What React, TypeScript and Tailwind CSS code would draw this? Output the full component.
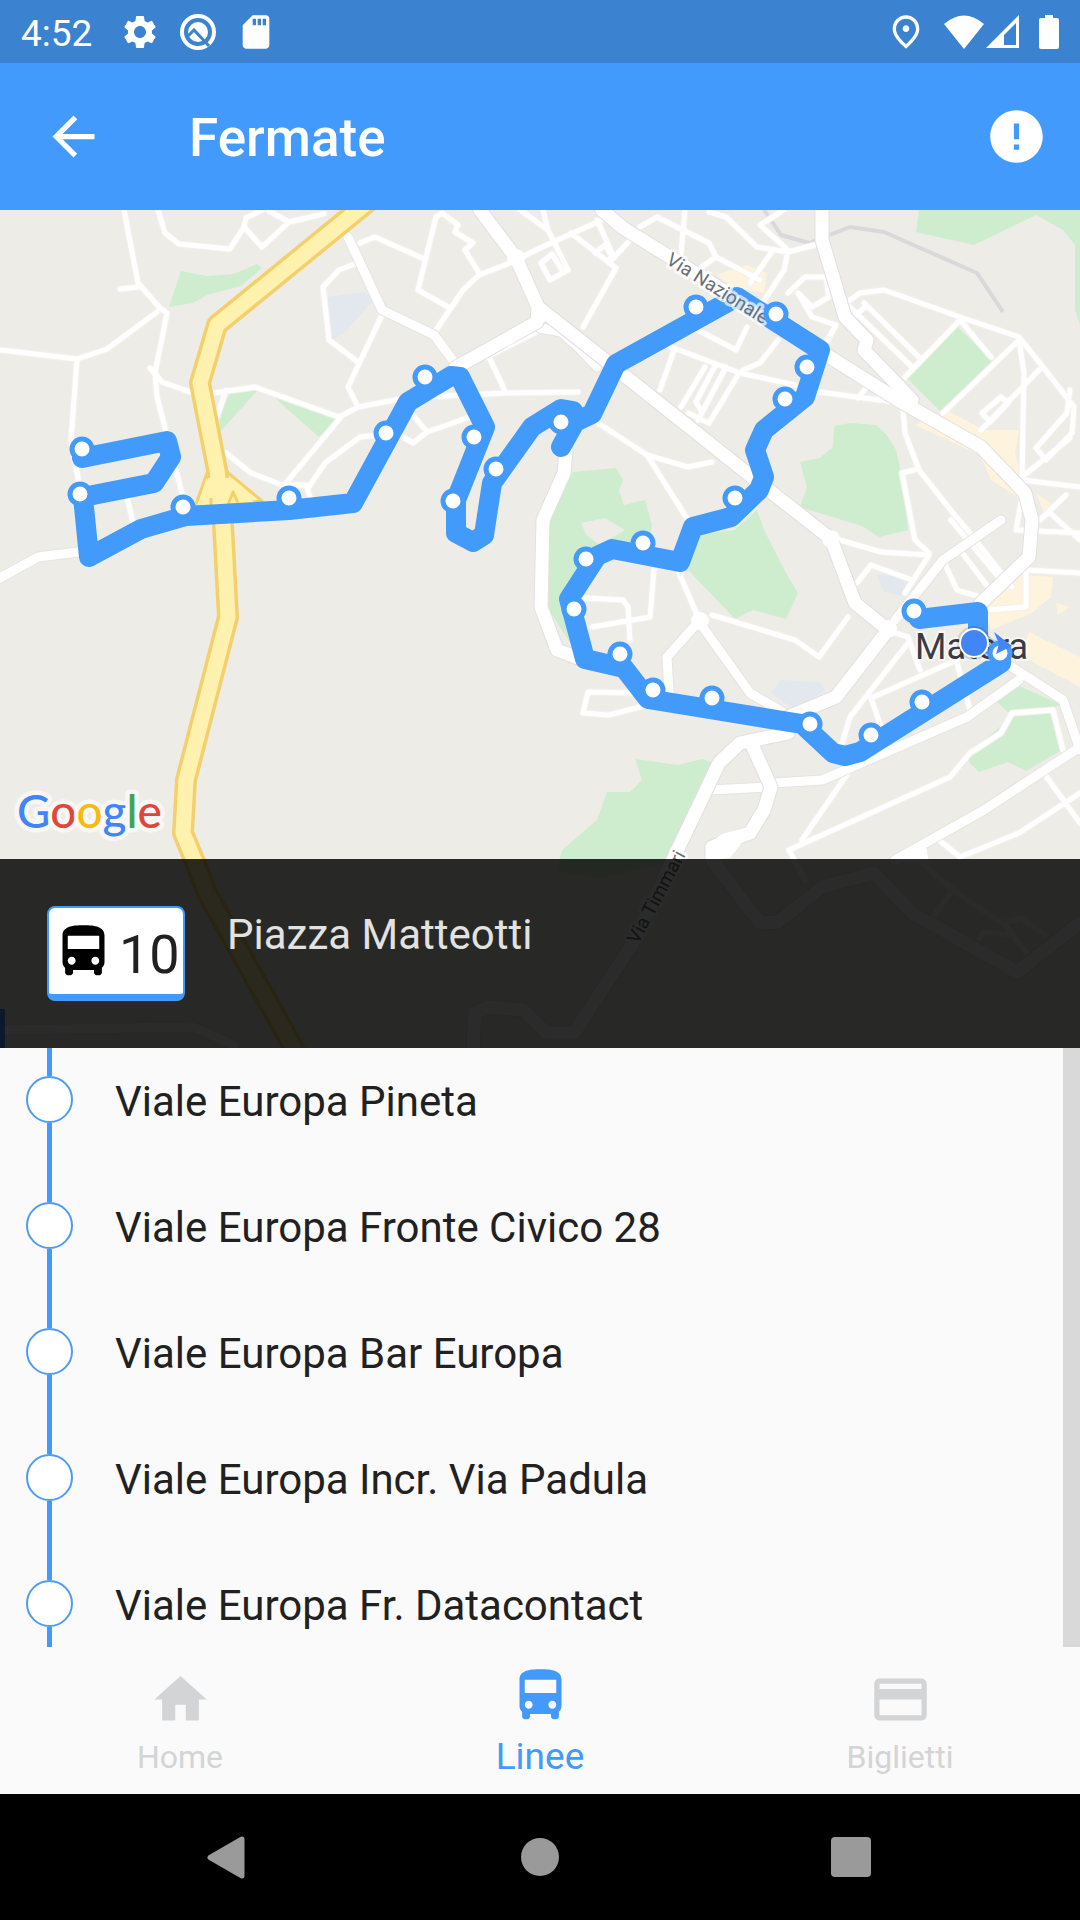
import {
    MdArrowBack,
    MdCreditCard,
    MdDirectionsBus,
    MdError,
    MdHome,
    MdOutlinePlace,
    MdSdCard,
    MdSettings,
} from "react-icons/md";

const stops = [
    "Viale Europa Pineta",
    "Viale Europa Fronte Civico 28",
    "Viale Europa Bar Europa",
    "Viale Europa Incr. Via Padula",
    "Viale Europa Fr. Datacontact",
];

const route =
    "M82 458 L167 441 L171 457 L154 483 L83 497 L89 557 L141 529 L186 516 L289 510 L353 503 L408 402 L451 376 L460 377 L485 427 L456 500 L456 533 L473 542 L484 535 L492 483 L532 427 L561 409 L573 411 L576 420 L561 447 L575 422 L592 414 L616 364 L737 297 L820 350 L805 397 L764 430 L755 450 L764 477 L759 490 L731 517 L693 527 L680 562 L612 549 L597 556 L569 599 L585 659 L624 668 L648 699 L802 724 L833 753 L845 756 L860 752 L1001 663 L1001 655 L978 642 L978 612 L919 619";

const markers = [
    [82, 449], [80, 494], [183, 507], [289, 498], [386, 433], [425, 377],
    [474, 437], [496, 469], [453, 501], [561, 422], [696, 307], [776, 314],
    [807, 367], [785, 399], [735, 498], [643, 543], [586, 559], [574, 609],
    [620, 654], [653, 690], [712, 698], [810, 724], [871, 735], [922, 702],
    [914, 611], [1000, 653],
];

const parks = [
    "181,271 207,276 234,274 257,264 262,268 241,286 207,295 193,303 169,307",
    "231,392 257,391 220,432 219,413",
    "275,398 336,419 319,437",
    "919,210 1080,210 1080,325 1075,310 1075,245 1063,230 1036,215 974,245 916,232",
    "958,327 992,361 941,412 906,377",
    "834,426 850,423 876,425 886,434 896,450 902,477 908,530 879,537 862,526 819,513 800,507 807,487 800,462 820,458 833,447",
    "573,472 616,468 623,480 619,490 624,505 645,500 652,525 648,550 597,558 572,600 570,643 549,610 549,520",
    "692,535 735,530 757,510 764,530 786,573 798,593 786,619 753,610 735,619 714,597 688,570",
    "635,759 678,765 702,759 714,763 665,862 600,878 557,870 562,850 597,820 607,792 630,792 642,780",
    "1017,685 1062,705 1012,716 995,700",
    "1012,717 1053,713 1062,750 1026,771 1008,762 979,772 965,758 984,740",
];

const campuses = [
    "327,297 365,292 374,300 344,333 331,340",
    "877,575 902,573 908,597 884,592",
    "781,680 819,682 826,690 795,710 771,693",
];

const shops = [
    "716,275 747,265 767,273 764,293 733,287",
    "946,410 984,430 1019,430 1015,453 1022,480 1022,500 991,480 980,455 915,425",
    "1022,575 1053,577 1051,597 1032,613 991,630 985,608",
    "1029,632 1080,657 1080,687 1020,655",
    "1036,493 1056,507 1046,517",
    "1056,603 1070,607 1058,615",
];

const minorRoads = [
    "M124 210 L138 283 L160 308 L167 313 L155 373 L157 397 L182 493",
    "M120 289 L138 287",
    "M0 350 L77 359 L107 349 L157 312",
    "M77 359 L71 440 L79 483",
    "M127 497 L133 523",
    "M150 368 L162 382 L190 392",
    "M158 210 L165 233 L179 244 L230 249 L244 227 L246 218 L262 210",
    "M244 227 L262 247 L289 222 L324 214 M289 222 L269 211",
    "M214 393 L255 387 L339 417 L358 407 L406 398 L506 393 L578 392",
    "M226 390 L217 417",
    "M226 453 L251 473 L282 485 L306 485 L310 497",
    "M341 417 L286 483",
    "M308 488 L325 463 L360 437 L396 433 L413 443 L427 432 L470 417 M413 415 L427 432",
    "M358 407 L348 387 L382 315",
    "M358 362 L329 340 L323 287 L339 270 L360 262",
    "M360 243 L375 237 L422 258",
    "M448 307 L418 290 L436 217 L442 213 L458 225 L455 232 L473 243 L465 250 L479 273",
    "M434 333 L463 290 L479 275 L510 263 L540 248 L602 220",
    "M489 357 L506 393 M487 357 L540 330",
    "M520 210 L548 230 L568 270 L550 280 L541 263 L552 254 L562 270",
    "M543 210 L548 230",
    "M571 233 L616 268 L583 327 M597 220 L612 253 L609 263 L630 240",
    "M595 253 L605 245 L612 256",
    "M640 227 L657 217 L709 243 L716 257 L760 280 M685 210 L681 253 M716 257 L700 268",
    "M709 212 L726 217 L757 247 L788 252 L815 245 M784 210 L760 225 L788 250",
    "M771 253 L750 283 M788 250 L784 270 L760 307",
    "M788 293 L805 277 L826 277 L829 297 L812 307 L798 293 L812 317 L836 325 L826 343",
    "M846 303 L860 293 L884 290 L960 317 L1019 337 L1043 367 L1074 407 L1072 433 L1046 460 L1036 448 L1067 413 L1070 390",
    "M991 357 L960 320 L905 377 M943 413 L1019 340",
    "M850 307 L912 367 M864 303 L919 357 M850 320 L866 306",
    "M1019 340 L1024 373 L1022 477 L1070 438 M1022 480 L1080 487",
    "M981 430 L1039 370 M982 413 L1001 397 L1008 403 L990 422 L982 413",
    "M903 410 L905 433 L919 470 L953 513 L970 533 L1012 587",
    "M914 470 L902 473 L915 540 L929 553",
    "M819 392 L902 403 M858 398 L866 388",
    "M598 423 L647 455 L688 520 M647 455 L688 467 L712 462",
    "M671 347 L740 373 L795 385 M674 350 L660 390 M705 367 L681 407 M726 367 L698 420",
    "M738 375 L709 423 L688 413 M698 330 L736 350 L747 327 M743 370 L760 363 L778 340",
    "M715 366 L696 402 L702 412",
    "M585 598 L623 600 L628 607 L630 640",
    "M654 570 L650 617 L592 627 M679 573 L698 617",
    "M712 615 L795 640 L819 657 L848 617",
    "M633 693 L588 692 L583 713 L609 715 L640 707",
    "M840 540 L881 552 L929 555 L905 593 M857 583 L871 565 L912 580",
    "M951 520 L1001 580 M960 550 L988 587 M943 560 L957 590 L980 597",
    "M1022 497 L1016 530 L1080 533 M1040 520 L1066 495 M1050 513 L1080 540",
    "M1080 573 L1026 570 L1026 607 L988 610",
    "M957 660 L871 698 L881 727 M908 643 L850 717 L841 747 M957 663 L970 710",
    "M895 633 L908 637 L920 670",
    "M850 770 L802 840",
    "M805 880 L789 850 L950 777 L970 753 L1001 733 L1012 713 L1053 710 L1063 750",
    "M1043 772 L1080 823 M1080 793 L1019 833 L960 857 L939 840",
    "M922 863 L953 890 L1005 925 L1028 955 M953 890 L932 918 M978 940 L985 932 L1008 935",
    "M1008 922 L1020 918 L1045 935",
];

const mediumRoads = [
    "M348 237 L382 310 L434 335 L455 363",
    "M540 328 L561 332 L578 347 L597 367",
    "M0 578 L38 557 L78 552",
    "M1001 520 L943 560 L895 620",
    "M700 620 L667 657 L669 693",
    "M700 623 L750 693 L791 717",
    "M774 783 L822 780 L850 768 L967 717 L1019 680",
    "M1080 747 L984 810 L895 860",
    "M1012 667 L1063 700 L1080 750",
    "M709 790 L771 787",
    "M0 1030 L193 1027 L234 1045",
];

const majorRoads = [
    "M480 210 L516 258 L538 307 L605 360 L747 473 L831 539 L855 603 L888 630 L836 697 L788 717",
    "M538 307 L537 322 L455 368",
    "M602 210 L623 228 L747 305 L898 400 L981 447 L1025 493 L1032 520 L1029 557 L981 603",
    "M822 210 L822 240 L845 317 L867 340 L864 350 L912 400",
    "M566 450 L564 473 L543 520 L541 607 L557 650 L578 658",
    "M788 733 L740 743 L719 763 L698 807 L633 943 L574 1033 L547 1033 L523 1010 L489 1007 L475 1013 L473 1048",
    "M753 747 L771 787 L764 810 L750 833 L712 847 L712 860 L760 923 L778 922 L822 887 L874 873 L912 913 L1017 972 L1080 923",
];

const highway =
    "M385 188 L217 325 L200 383 L217 470 L223 525 L228 617 L186 780 L183 833 L195 862 L207 893 L296 1052";

function RoadLayer({ roads, width, edge }: { roads: string[]; width: number; edge: string }) {
    return (
        <g fill="none" strokeLinejoin="round" strokeLinecap="round">
            <path d={roads.join(" ")} stroke={edge} strokeWidth={width + 2} />
            <path d={roads.join(" ")} stroke="#fff" strokeWidth={width} />
        </g>
    );
}

function StopsMap() {
    return (
        <svg
            viewBox="0 210 1080 838"
            className="block h-auto w-full bg-[#eeece7]"
            fontFamily="Roboto, sans-serif"
            role="img"
            aria-label="Percorso linea 10"
        >
            <g fill="#cdedce">
                {parks.map((points) => (
                    <polygon key={points} points={points} />
                ))}
            </g>
            <polygon points="581,523 605,518 625,530 600,545 586,535" fill="#eeece7" />
            <g fill="#e3e7ee">
                {campuses.map((points) => (
                    <polygon key={points} points={points} />
                ))}
            </g>
            <g fill="#fef3dc">
                {shops.map((points) => (
                    <polygon key={points} points={points} />
                ))}
            </g>

            <path
                d="M764 210 L781 235 L809 243 L850 227 L884 232 L977 273 L1003 312"
                fill="none"
                stroke="#dbd7da"
                strokeWidth="4"
                strokeLinejoin="round"
            />
            <RoadLayer roads={minorRoads} width={5} edge="#f3f1ee" />
            <RoadLayer roads={mediumRoads} width={9} edge="#e6e4e1" />
            <RoadLayer roads={majorRoads} width={13} edge="#e2dfe0" />
            <g fill="#fff">
                <circle cx="700" cy="621" r="9" />
                <circle cx="831" cy="539" r="9" />
                <circle cx="888" cy="629" r="9" />
                <circle cx="516" cy="258" r="9" />
                <path d="M538 312 L550 318 L500 352 L536 325 Z" />
                <path d="M709 860 L706 846 L722 834 L752 826 L744 840 L730 858 Z" />
                <path d="M895 862 L925 842 L929 862 Z" />
            </g>

            {/* highway and its exit */}
            <g fill="none" strokeLinejoin="round">
                <path d="M208 470 L195 507 L262 501 L226 471" fill="#fff2ae" stroke="#f4d06c" strokeWidth="3" />
                <path d={highway} stroke="#f4d06c" strokeWidth="22" />
                <path d={highway} stroke="#fff2ae" strokeWidth="15" />
                <path d="M208 478 L229 478 L254 502 L200 505 Z" fill="#fff2ae" />
                <path d="M228 505 L233 492 L238 503 M211 506 L211 498" stroke="#f4d06c" strokeWidth="3" />
            </g>

            <path
                d={route}
                fill="none"
                stroke="#429afb"
                strokeWidth="20"
                strokeLinejoin="round"
                strokeLinecap="round"
            />
            <rect x="0" y="1009" width="5" height="39" fill="#429afb" />

            <g fontSize="19" fill="#6b7076" stroke="#fff" strokeOpacity="0.7" strokeWidth="6" strokeLinejoin="round" paintOrder="stroke">
                <text transform="translate(665 263) rotate(32)">Via Nazionale</text>
                <text transform="translate(638 945) rotate(-62)">Via Timmari</text>
            </g>
            <text x="915" y="659" fontSize="36" fill="#3b3b44" stroke="#fff" strokeOpacity="0.6" strokeWidth="4" paintOrder="stroke">
                Matera
            </text>

            <g fill="#fff" stroke="#429afb" strokeWidth="5">
                {markers.map(([x, y]) => (
                    <circle key={`${x}-${y}`} cx={x} cy={y} r="10" />
                ))}
            </g>

            {/* current position */}
            <path d="M994 632 L1012 646 L996 654 L999 644 Z" fill="#4285f4" />
            <circle cx="974" cy="643" r="17" fill="#000" fillOpacity="0.12" />
            <circle cx="974" cy="643" r="14" fill="#4285f4" stroke="#fff" strokeWidth="2" />

            <text
                x="17"
                y="828"
                fontFamily="Lato, sans-serif"
                fontSize="46"
                fontWeight="500"
                stroke="#fff"
                strokeOpacity="0.6"
                strokeWidth="9"
                strokeLinejoin="round"
                paintOrder="stroke"
            >
                <tspan fill="#4285f4">G</tspan>
                <tspan fill="#e04639">o</tspan>
                <tspan fill="#f7bb0c">o</tspan>
                <tspan fill="#4285f4">g</tspan>
                <tspan fill="#3fa556">l</tspan>
                <tspan fill="#e04639">e</tspan>
            </text>
        </svg>
    );
}

function StatusBar() {
    return (
        <div className="flex h-[63px] shrink-0 items-center bg-[#3b83d0] pl-[21px] pr-[21px] text-white">
            <span className="pt-1 text-[37px] leading-none">4:52</span>
            <div className="ml-7 flex items-center gap-[18px]">
                <MdSettings className="size-10" />
                <svg viewBox="0 0 40 40" className="size-10" fill="none">
                    <circle cx="20" cy="20" r="16" stroke="#fff" strokeWidth="4" />
                    <circle cx="20" cy="20" r="10" fill="#fff" />
                    <path d="M10 24 L16 18 L31 34" stroke="#3b83d0" strokeWidth="3" />
                </svg>
                <MdSdCard className="size-10" />
            </div>
            <div className="ml-auto flex items-center">
                <MdOutlinePlace className="mr-[18px] size-10" />
                <svg viewBox="0 0 40 34" className="h-[34px] w-10" fill="#fff">
                    <path d="M0 9 Q20 -8 40 9 L20 34 Z" />
                </svg>
                <svg viewBox="0 0 34 34" className="ml-[2px] h-[34px] w-[34px]" fill="#fff">
                    <path fillRule="evenodd" d="M33 0 V33 H0 Z M30 8 L18 20 V30 H30 Z" />
                </svg>
                <svg viewBox="0 0 20 34" className="ml-[19px] h-[34px] w-5" fill="#fff">
                    <path d="M6 0 H14 V3 H18 Q20 3 20 5 V32 Q20 34 18 34 H2 Q0 34 0 32 V5 Q0 3 2 3 H6 Z" />
                </svg>
            </div>
        </div>
    );
}

function AppBar() {
    return (
        <header className="flex h-[147px] shrink-0 items-center bg-[#429afc] pl-[42px] pr-8 text-white">
            <button type="button" aria-label="Indietro">
                <MdArrowBack className="size-[63px]" />
            </button>
            <h1 className="ml-[84px] pt-1 text-[53px] font-medium leading-none">Fermate</h1>
            <button type="button" aria-label="Avvisi" className="ml-auto">
                <MdError className="size-[63px]" />
            </button>
        </header>
    );
}

function LineBanner() {
    return (
        <div className="absolute inset-x-0 bottom-0 flex h-[189px] items-start bg-black/83 px-[47px] pt-[47px]">
            <div className="flex h-[95px] w-[138px] items-center rounded-lg border-2 border-b-[7px] border-[#429afb] bg-white pl-[3px]">
                <MdDirectionsBus className="size-[63px] shrink-0 text-black" />
                <span className="ml-1 pt-2 text-[54px] leading-none text-[#212121]">10</span>
            </div>
            <h2 className="ml-[42px] pt-1 text-[42px] leading-[50px] text-[#e2e2e1]">Piazza Matteotti</h2>
        </div>
    );
}

function StopList() {
    return (
        <div className="flex min-h-0 flex-1 overflow-hidden">
            <ul className="-mt-3 flex-1">
                {stops.map((stop) => (
                    <li key={stop} className="flex h-[126px] items-center pl-[26px]">
                        <div className="flex h-full w-[47px] flex-col items-center">
                            <span className="w-[5px] flex-1 bg-[#429afb]" />
                            <span className="size-[47px] rounded-full border-2 border-[#4f9bf0] bg-white" />
                            <span className="w-[5px] flex-1 bg-[#429afb]" />
                        </div>
                        <span className="ml-[42px] pt-[6px] text-[42px] leading-[50px] text-[#212121]">{stop}</span>
                    </li>
                ))}
            </ul>
            <div className="w-[17px] bg-[#d9d9d9]" />
        </div>
    );
}

function BottomNav() {
    return (
        <nav className="grid h-[147px] shrink-0 grid-cols-3 bg-[#fafafa] pb-[15px] text-[#d3d4d5]">
            <a href="#home" className="flex flex-col items-center justify-end">
                <MdHome className="size-[63px]" />
                <span className="mt-1 text-[32px] leading-[44px]">Home</span>
            </a>
            <a href="#linee" className="flex flex-col items-center justify-end text-[#429afb]">
                <MdDirectionsBus className="size-[63px]" />
                <span className="mt-2 text-[37px] leading-[44px]">Linee</span>
            </a>
            <a href="#biglietti" className="flex flex-col items-center justify-end">
                <MdCreditCard className="size-[63px]" />
                <span className="mt-1 text-[32px] leading-[44px]">Biglietti</span>
            </a>
        </nav>
    );
}

function SystemNav() {
    return (
        <div className="flex h-[126px] shrink-0 items-center justify-center gap-[248px] bg-black">
            <button type="button" aria-label="Back">
                <svg viewBox="0 0 63 63" className="size-[63px]" fill="#9a9a9a" stroke="#9a9a9a">
                    <path d="M12 31.5 L44 13 V50 Z" strokeWidth="5" strokeLinejoin="round" />
                </svg>
            </button>
            <button type="button" aria-label="Home" className="flex size-[63px] items-center justify-center">
                <span className="size-[38px] rounded-full bg-[#9a9a9a]" />
            </button>
            <button type="button" aria-label="Recenti" className="flex size-[63px] items-center justify-center">
                <span className="size-10 rounded bg-[#9a9a9a]" />
            </button>
        </div>
    );
}

export default function App() {
    return (
        <div className="flex h-screen flex-col bg-[#fafafa] font-[Roboto,sans-serif]">
            <StatusBar />
            <AppBar />
            <div className="relative shrink-0">
                <StopsMap />
                <LineBanner />
            </div>
            <StopList />
            <BottomNav />
            <SystemNav />
        </div>
    );
}
